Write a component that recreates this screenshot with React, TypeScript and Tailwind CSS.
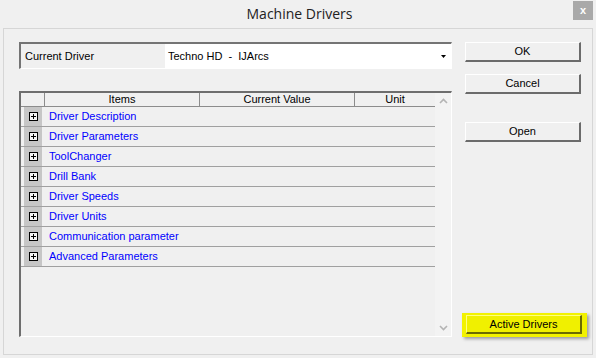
import React from 'react';

const items = [
  'Driver Description',
  'Driver Parameters',
  'ToolChanger',
  'Drill Bank',
  'Driver Speeds',
  'Driver Units',
  'Communication parameter',
  'Advanced Parameters',
];

function WinButton({ label }: { label: string }) {
  return (
    <button className="block h-[20px] w-full bg-[#f0f0f0] border-t border-l border-t-white border-l-white border-b-2 border-r-2 border-b-[#6b6b6b] border-r-[#6b6b6b] text-[11px] leading-none text-black">
      {label}
    </button>
  );
}

function PlusBox() {
  return (
    <svg width="9" height="9" viewBox="0 0 9 9" className="block">
      <rect x="0.5" y="0.5" width="8" height="8" fill="#f4f4f4" stroke="#000" />
      <path d="M2 4.5h5M4.5 2v5" stroke="#000" strokeWidth="1" />
    </svg>
  );
}

function Chevron({ up }: { up?: boolean }) {
  return (
    <svg width="9" height="6" viewBox="0 0 9 6">
      <path d={up ? 'M1 5l3.5-3.5L8 5' : 'M1 1l3.5 3.5L8 1'} fill="none" stroke="#b4b4b4" strokeWidth="1.6" />
    </svg>
  );
}

export default function App() {
  return (
    <div className="w-[596px] h-[358px] bg-[#f0f0f0] flex flex-col font-['Liberation_Sans',Arial,sans-serif] overflow-hidden">
      {/* Title bar */}
      <div className="h-[28px] flex items-start">
        <div className="flex-1 h-full flex items-center justify-center pl-[26px]">
          <span className="font-['Open_Sans',sans-serif] text-[14px] text-[#222] leading-none">Machine Drivers</span>
        </div>
        <div className="w-[20px] h-[19px] mt-[1px] mr-[3px] bg-[#a9a9a9] flex items-center justify-center text-white text-[11px] font-bold leading-none pb-[1px]">
          x
        </div>
      </div>

      {/* Client area */}
      <div className="flex-1 mx-[3px] mb-[3px] border border-[#d6d6d6] flex pl-[15px] pt-[13px] pb-[17px]">
        {/* Left column */}
        <div className="w-[433px] flex flex-col">
          <div className="h-[27px] flex border-t-2 border-l-2 border-t-[#747474] border-l-[#747474] border-b border-r border-b-white border-r-white">
            <div className="w-[144px] flex items-center pl-[4px] text-[11px] text-black">Current Driver</div>
            <div className="flex-1 bg-white flex items-center pl-[3px] pr-[5px] text-[11px] text-black">
              <span className="flex-1 whitespace-pre">Techno HD  -  IJArcs</span>
              <svg width="5" height="3" viewBox="0 0 5 3">
                <path d="M0 0h5L2.5 3z" fill="#000" />
              </svg>
            </div>
          </div>

          <div className="mt-[22px] flex-1 flex border-t-2 border-l-2 border-t-[#6e6e6e] border-l-[#6e6e6e] border-b border-r border-b-white border-r-white">
            <div className="w-[414px] flex flex-col">
              <div className="h-[14px] flex border-b border-[#8c8c8c] text-[11px] leading-[13px] text-black">
                <div className="w-[24px] border-r border-[#8c8c8c]" />
                <div className="w-[155px] border-r border-[#8c8c8c] text-center">Items</div>
                <div className="w-[155px] border-r border-[#8c8c8c] text-center">Current Value</div>
                <div className="flex-1 text-center">Unit</div>
              </div>
              {items.map((name) => (
                <div key={name} className="h-[20px] flex border-b border-[#a0a0a0]">
                  <div className="w-[24px] pl-[3px]">
                    <div className="w-[18px] h-full bg-[#c6c6c6] flex items-center justify-center">
                      <PlusBox />
                    </div>
                  </div>
                  <div className="flex-1 flex items-center pl-[4px] text-[11px] text-[#0000ff]">{name}</div>
                </div>
              ))}
            </div>
            <div className="flex-1 bg-[#f3f3f3] flex flex-col items-center justify-between pt-[5px] pb-[5px]">
              <Chevron up />
              <Chevron />
            </div>
          </div>
        </div>

        {/* Right column */}
        <div className="w-[116px] ml-[13px] flex flex-col">
          <WinButton label="OK" />
          <div className="mt-[12px]">
            <WinButton label="Cancel" />
          </div>
          <div className="mt-[28px]">
            <WinButton label="Open" />
          </div>
          <div className="mt-auto -ml-[3px] w-[125px] h-[24px] bg-[#f2f200] pl-[4px] pt-[2px] pr-[5px] pb-[3px] shadow-[2px_2px_3px_rgba(0,0,0,0.35)]">
            <button className="block w-full h-full bg-[#f0f000] border-t border-l border-t-[#ffff80] border-l-[#ffff80] border-b-2 border-r-2 border-b-[#6b6b00] border-r-[#6b6b00] text-[11px] leading-none text-black">
              Active Drivers
            </button>
          </div>
        </div>
      </div>
    </div>
  );
}
